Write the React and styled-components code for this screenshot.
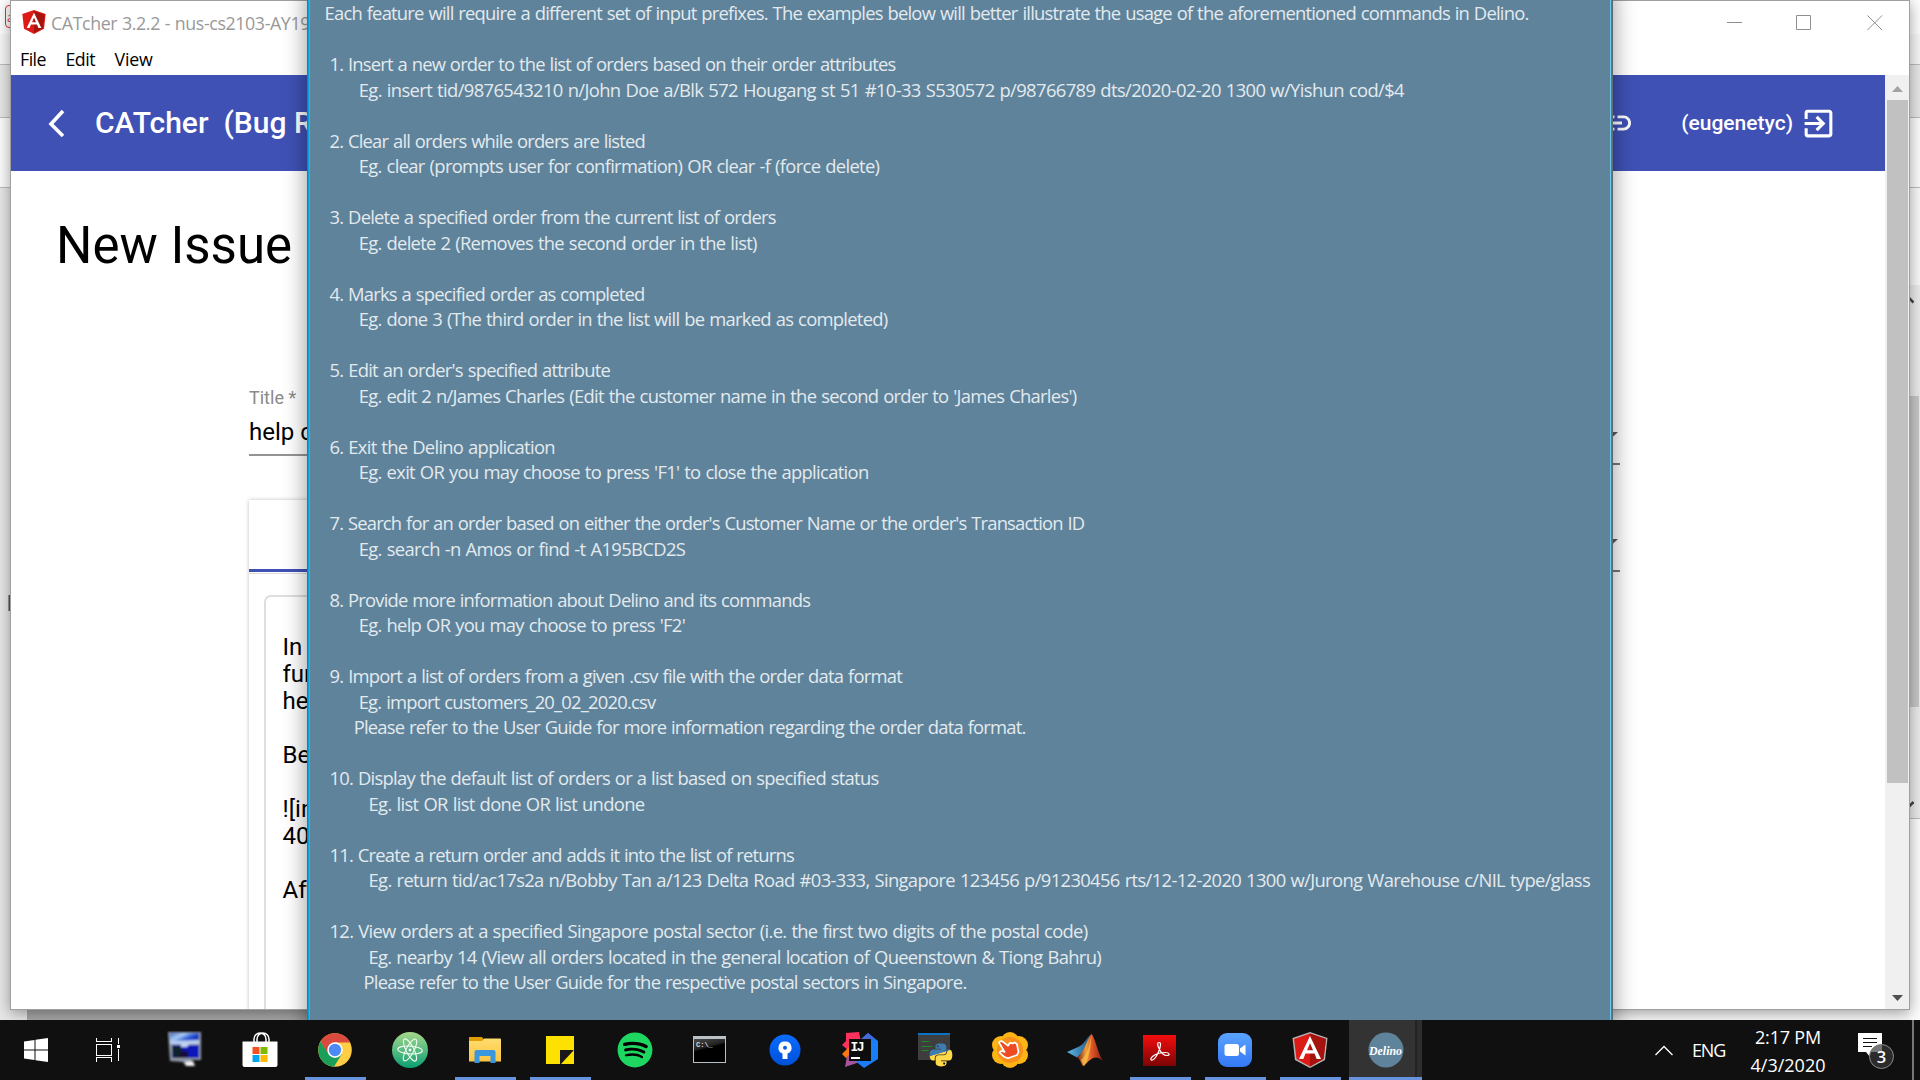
import React from "react";
import styled, { createGlobalStyle } from "styled-components";
import { MdLink, MdExitToApp } from "react-icons/md";
import { FaSpotify, FaPython } from "react-icons/fa";

const UI = '"Open Sans", "Noto Sans", sans-serif';

const GlobalStyle = createGlobalStyle`
  * { box-sizing: border-box; }
  html, body { margin: 0; padding: 0; overflow: hidden; background: #101010; }
`;

const Desktop = styled.div`
  position: relative;
  width: 1920px;
  height: 1080px;
  overflow: hidden;
  font-family: ${UI};
  display: flex;
  flex-direction: column;
`;

const Workspace = styled.div`
  position: relative;
  height: 1020px;
  overflow: hidden;
  background: #fafafa;
`;

/* ---------- letter-spacing that makes a run of text as wide as asked ---------- */
const ctx = document.createElement("canvas").getContext("2d");
function tracking(text, width, font, wordGap) {
  ctx.font = font;
  const spaces = text.split(" ").length - 1;
  return (width - ctx.measureText(text).width - spaces * wordGap) / text.length;
}

const Run = styled.span`
  white-space: pre;
  word-spacing: ${(p) => p.$wordGap}px;
`;

function Fit({ text, width, size, weight = 400, wordGap = 0 }) {
  const spacing = tracking(text, width, `${weight} ${size}px ${UI}`, wordGap);
  return <Run $wordGap={wordGap} style={{ letterSpacing: `${spacing.toFixed(4)}px` }}>{text}</Run>;
}

/* ---------- browser behind ---------- */
const Behind = styled.div`
  height: 100%;
  display: flex;
  justify-content: space-between;
`;
const Strip = styled.div`
  width: ${(p) => p.$w}px;
  display: flex;
  flex-direction: column;
  overflow: hidden;
`;
const Band = styled.div`
  height: ${(p) => p.$h}px;
  flex: none;
  background: ${(p) => p.$c};
  border-bottom: ${(p) => (p.$line ? "1px solid #bdbdbd" : "0")};
`;
const TabBadge = styled.div`
  width: 24px;
  height: 23px;
  margin: 5px 0 0 5px;
  border: 1.5px solid #e5322d;
  border-radius: 4px;
  color: #e5322d;
  font: 12px ${UI};
  line-height: 24px;
  padding-left: 1px;
`;
const Grip = styled.div`
  width: 3px;
  height: 16px;
  margin: 407px 0 0 8px;
  background: linear-gradient(90deg, #999 0 1px, #555 1px);
`;
const BackThumb = styled.div`
  width: 10px;
  height: 311px;
  background: #c8c8c8;
  margin-top: 91px;
`;
const Slash = styled.svg`
  display: block;
  margin-top: ${(p) => p.$top}px;
`;
const BackFloor = styled.div`
  position: absolute;
  left: 27px;
  bottom: 0;
  width: 281px;
  height: 12px;
  background: #a8a8a8;
`;

/* ---------- CATcher window ---------- */
const Window = styled.section`
  position: absolute;
  left: 10px;
  top: 0;
  width: 1900px;
  height: 1010px;
  border: 1px solid #a0a0a0;
  background: #fff;
  box-shadow: 0 3px 14px rgba(0, 0, 0, 0.38);
  display: flex;
  flex-direction: column;
`;
const TitleBar = styled.header`
  height: 42px;
  flex: none;
  display: flex;
  align-items: flex-start;
  justify-content: space-between;
  padding: 9px 26px 0 11px;
  color: #999;
  font-size: 17.8px;
`;
const AppName = styled.div`
  display: flex;
  gap: 5px;
  line-height: 27px;
`;
const Controls = styled.div`
  display: flex;
  gap: 54px;
  padding-top: 5px;
  svg:last-child { margin-left: 2px; }
`;
const MenuBar = styled.nav`
  height: 32px;
  flex: none;
  padding: 3px 0 0 9px;
  display: flex;
  gap: 19.5px;
  font-size: 17.8px;
  line-height: 26px;
  color: #000;
`;
const Body = styled.div`
  display: flex;
  flex: 1;
  min-height: 0;
  font-family: Roboto, sans-serif;
`;
const Page = styled.main`
  flex: 1;
  display: flex;
  flex-direction: column;
  overflow: hidden;
`;
const Toolbar = styled.div`
  height: 96px;
  flex: none;
  background: #3f51b5;
  color: #fff;
  display: flex;
  align-items: center;
  padding: 0 48px 0 37px;
  font-weight: 500;
`;
const Brand = styled.div`
  font-size: 30px;
  line-height: 40px;
  margin: 0 0 0 29px;
  white-space: pre;
`;
const ToolbarEnd = styled.div`
  margin-left: auto;
  display: flex;
  align-items: center;
  font-size: 21px;
  svg { flex: none; }
`;
const User = styled.span`
  margin: 0 7px 0 47px;
`;
const PageTitle = styled.h1`
  margin: 45px 0 0 45px;
  font-weight: 400;
  font-size: 51px;
  line-height: 60px;
  color: #000;
`;
const Form = styled.div`
  flex: 1;
  padding: 109px 265px 0 238px;
  display: flex;
  gap: 36px;
`;
const MainColumn = styled.div`
  width: 1040px;
  display: flex;
  flex-direction: column;
`;
const Field = styled.label`
  display: flex;
  flex-direction: column;
  border-bottom: 2px solid #949494;
  height: 71px;
  margin-top: 0;
`;
const FieldLabel = styled.span`
  font-size: 18px;
  line-height: 22px;
  margin-top: 2px;
  color: #8a8a8a;
`;
const FieldValue = styled.span`
  font-size: 24px;
  line-height: 28px;
  margin-top: 9px;
  color: #000;
`;
const Editor = styled.div`
  margin-top: 44px;
  flex: 1;
  box-shadow: 0 0 4px rgba(0, 0, 0, 0.25);
  display: flex;
  flex-direction: column;
`;
const Tabs = styled.div`
  height: 74px;
  flex: none;
  border-bottom: 1px solid #dcdcdc;
  display: flex;
  padding-bottom: 1px;
`;
const Tab = styled.div`
  width: 300px;
  border-bottom: 3px solid #3f51b5;
`;
const TextBox = styled.div`
  margin: 21px 15px 0;
  height: 500px;
  border: 2px solid #dedede;
  border-radius: 7px;
  padding: 37px 16.5px;
  font-size: 24px;
  line-height: 27px;
  white-space: pre;
  color: #000;
`;
const SideColumn = styled.div`
  flex: 1;
  padding-top: 46px;
  display: flex;
  flex-direction: column;
  gap: 73px;
`;
const Select = styled.div`
  height: 34px;
  border-bottom: 2px solid #777;
  display: flex;
  justify-content: flex-end;
  padding-right: 2px;
`;
const Scrollbar = styled.div`
  width: 24px;
  background: #f0f0f0;
  display: flex;
  flex-direction: column;
  align-items: flex-start;
`;
const Thumb = styled.div`
  width: 21px;
  height: 683px;
  margin: 0 0 auto 2px;
  background: #c1c1c1;
`;
const ArrowBox = styled.div`
  height: 25px;
  width: 24px;
  padding: ${(p) => p.$pad}px 0 0 7px;
`;

/* ---------- help window ---------- */
const HelpWindow = styled.section`
  position: absolute;
  left: 307px;
  top: -12px;
  width: 1306px;
  height: 1060px;
  padding: 12px 0 0 16px;
  border-left: 1px solid #5f6b72;
  border-right: 1px solid #5f6b72;
  background:
    linear-gradient(90deg, #0aa0dc 0 1px, #46a8d0 1px 2px, transparent 2px calc(100% - 2px), #6cc8ea calc(100% - 2px) calc(100% - 1px), #1492c8 calc(100% - 1px)),
    #5f839b;
  box-shadow: 0 0 22px rgba(0, 0, 0, 0.42);
  display: flex;
  flex-direction: column;
`;
const HelpLine = styled.div`
  height: 25.5px;
  flex: none;
  line-height: 25.5px;
  font-size: 18.4px;
  color: #e3eaee;
  padding-left: ${(p) => p.$indent}px;
  margin-top: ${(p) => (p.$gap ? "25.5px" : "0")};
`;

const HELP = [
  [325, 1529, "Each feature will require a different set of input prefixes. The examples below will better illustrate the usage of the aforementioned commands in Delino."],
  [330, 896, "1. Insert a new order to the list of orders based on their order attributes", 1],
  [359.2, 1404.5, "Eg. insert tid/9876543210 n/John Doe a/Blk 572 Hougang st 51 #10-33 S530572 p/98766789 dts/2020-02-20 1300 w/Yishun cod/$4"],
  [330, 645.5, "2. Clear all orders while orders are listed", 1],
  [359.2, 879.8, "Eg. clear (prompts user for confirmation) OR clear -f (force delete)"],
  [330, 776.3, "3. Delete a specified order from the current list of orders", 1],
  [359.2, 757.3, "Eg. delete 2 (Removes the second order in the list)"],
  [330, 645, "4. Marks a specified order as completed", 1],
  [359.2, 888, "Eg. done 3 (The third order in the list will be marked as completed)"],
  [330, 610.7, "5. Edit an order's specified attribute", 1],
  [359.2, 1077, "Eg. edit 2 n/James Charles (Edit the customer name in the second order to 'James Charles')"],
  [330, 555.3, "6. Exit the Delino application", 1],
  [359.2, 869, "Eg. exit OR you may choose to press 'F1' to close the application"],
  [330, 1084.8, "7. Search for an order based on either the order's Customer Name or the order's Transaction ID", 1],
  [359.2, 685.7, "Eg. search -n Amos or find -t A195BCD2S"],
  [330, 810.6, "8. Provide more information about Delino and its commands", 1],
  [359.2, 685.5, "Eg. help OR you may choose to press 'F2'"],
  [330, 902.5, "9. Import a list of orders from a given .csv file with the order data format", 1],
  [359.2, 656, "Eg. import customers_20_02_2020.csv"],
  [354.2, 1026, "Please refer to the User Guide for more information regarding the order data format."],
  [330, 879, "10. Display the default list of orders or a list based on specified status", 1],
  [369, 645, "Eg. list OR list done OR list undone"],
  [330, 794.5, "11. Create a return order and adds it into the list of returns", 1],
  [369, 1590.5, "Eg. return tid/ac17s2a n/Bobby Tan a/123 Delta Road #03-333, Singapore 123456 p/91230456 rts/12-12-2020 1300 w/Jurong Warehouse c/NIL type/glass"],
  [330, 1088, "12. View orders at a specified Singapore postal sector (i.e. the first two digits of the postal code)", 1],
  [369, 1101.5, "Eg. nearby 14 (View all orders located in the general location of Queenstown & Tiong Bahru)"],
  [364, 967, "Please refer to the User Guide for the respective postal sectors in Singapore."],
];

/* ---------- taskbar ---------- */
const Taskbar = styled.footer`
  position: relative;
  height: 60px;
  flex: none;
  background: #101010;
  color: #fff;
  display: flex;
`;
const SystemButton = styled.div`
  width: 72px;
  display: flex;
  align-items: center;
  justify-content: center;
`;
const Apps = styled.div`
  display: flex;
  gap: 14px;
  padding-left: 11px;
`;
const AppButton = styled.div`
  width: 61px;
  height: 60px;
  display: flex;
  align-items: center;
  justify-content: center;
  border-bottom: 3px solid ${(p) => (p.$open ? "#6893de" : "transparent")};
  padding: 3px 2px 0 0;
`;
const ActiveApp = styled(AppButton)`
  width: 73px;
  margin-left: -6px;
  padding-right: 0;
  background: linear-gradient(90deg, #333 0 66px, #232323 66px 68px, #2e2e2e 68px);
`;
const Tray = styled.div`
  margin-left: auto;
  display: flex;
  align-items: center;
  font-size: 18px;
`;
const Lang = styled.div`
  margin: 0 0 0 19px;
  width: 33px;
`;
const Clock = styled.div`
  margin: 0 31.5px 0 25.5px;
  width: 75px;
  display: flex;
  flex-direction: column;
  align-items: center;
  line-height: 28px;
  padding-top: 1px;
`;
const Peek = styled.div`
  width: 8px;
  height: 60px;
  margin-left: 17px;
  border-left: 2px solid #777;
`;

const Angular = ({ size, rim }) => (
  <svg width={size} height={size} viewBox="0 0 36 36">
    <path d="M18 0 35.5 6 33 28 18 36 3 28 .5 6Z" fill={rim || "#dd1b16"} />
    <path d="M18 1.5 34 7 31.5 27 18 34.4 4.500 27 2 7Z" fill="#dd1b16" />
    <path d="M18 1.500 34 7 31.500 27 18 34.400Z" fill="#a6120d" />
    <path d="M18 4 7 27h4.300l2.200-5.400h9L24.700 27H29ZM18 11.200l3 7h-6Z" fill="#fff" fillRule="evenodd" />
  </svg>
);

const StartIcon = () => (
  <svg width="24" height="24" viewBox="0 0 24 24" fill="#fff">
    <path d="M0 3.400 10.500 1.900V11.500H0ZM11.500 1.700 24 0V11.500H11.500ZM0 12.500H10.500V22.100L0 20.600ZM11.500 12.500H24V24L11.500 22.300Z" />
  </svg>
);
const TaskViewIcon = () => (
  <svg width="24" height="24" viewBox="0 0 24 24" fill="none" stroke="#fff" shapeRendering="crispEdges">
    <path d="M.5 0V3.500H15.500V0M.5 24V19.500H15.500V24M.5 6.500H15.500V17.500H.5ZM22.500 0V6M22.500 11V23" />
    <path d="M21 7h3v3h-3z" fill="#fff" stroke="none" />
  </svg>
);
const MonitorIcon = () => (
  <svg width="36" height="38" viewBox="0 0 36 38">
    <defs>
      <filter id="soft"><feGaussianBlur stdDeviation="0.9" /></filter>
      <linearGradient id="scr" x1="0" x2="1" y1="0" y2=".6"><stop offset="0" stopColor="#3a66c8" /><stop offset=".4" stopColor="#a9cdf4" /><stop offset=".7" stopColor="#2a5ad8" /><stop offset="1" stopColor="#0a28b4" /></linearGradient>
    </defs>
    <g filter="url(#soft)">
      <path d="M1 1h33v28H24l2 5h-8l-2-3-13-1Z" fill="#8f98a6" />
      <path d="M3 2h29v9H3Z" fill="url(#scr)" />
      <path d="M3 10l29-1v4H3Z" fill="#b9cdf0" />
      <path d="M5 14h27v13H5Z" fill="#0818b8" />
      <path d="M5 15h10v12H6Z" fill="#10242c" /><path d="M14 12h9l-3 4h-6Z" fill="#c2d2f4" />
      <path d="M14 20h7v7h-9Z" fill="#140c3a" /><path d="M18 31l8-1 2 5h-9Z" fill="#f0f0f0" />
    </g>
  </svg>
);
const StoreIcon = () => (
  <svg width="36" height="36" viewBox="0 0 36 36">
    <path d="M12 10V7a6 6 0 0 1 12 0v3M15 10V7a6 6 0 0 1 12 0v3" fill="none" stroke="#fff" strokeWidth="1.500" />
    <path d="M.5 9.500h35V33a2 2 0 0 1-2 2h-31a2 2 0 0 1-2-2Z" fill="#fff" />
    <path d="M10.500 15h7v7h-7z" fill="#f25022" /><path d="M18.500 15h7v7h-7z" fill="#7fba00" />
    <path d="M10.500 23h7v7h-7z" fill="#00a4ef" /><path d="M18.500 23h7v7h-7z" fill="#ffb900" />
  </svg>
);
const ChromeIcon = () => (
  <svg width="34" height="34" viewBox="0 0 34 34">
    <circle cx="17" cy="17" r="16.800" fill="#ffce44" />
    <path d="M2.500 8.600A16.800 16.800 0 0 1 32 9.500H17L9.800 21Z" fill="#db4a3f" />
    <path d="M2.500 8.600A16.800 16.800 0 0 0 16 33.800L24.200 20.500 17 25 10.300 20.800Z" fill="#1a9f5b" />
    <circle cx="17" cy="17" r="7.700" fill="#fff" /><circle cx="17" cy="17" r="6.200" fill="#4c8bf5" />
  </svg>
);
const AtomIcon = () => (
  <svg width="36" height="36" viewBox="0 0 36 36">
    <defs><linearGradient id="atom" x2="0" y2="1"><stop offset="0" stopColor="#a6d78c" /><stop offset="1" stopColor="#0a9f73" /></linearGradient></defs>
    <circle cx="18" cy="18" r="18" fill="url(#atom)" />
    <g fill="none" stroke="#eefaf0" strokeWidth="1.100">
      <ellipse cx="18" cy="18" rx="12.300" ry="3.900" transform="rotate(4 18 18)" />
      <ellipse cx="18" cy="18" rx="12.300" ry="3.900" transform="rotate(63 18 18)" />
      <ellipse cx="18" cy="18" rx="12.300" ry="3.900" transform="rotate(118 18 18)" />
    </g>
    <circle cx="18" cy="18" r="1.500" fill="#fff" />
  </svg>
);
const FolderIcon = () => (
  <svg width="32" height="28" viewBox="0 0 32 28">
    <defs><linearGradient id="fold" x2="0" y2="1"><stop offset="0" stopColor="#ffdc6e" /><stop offset="1" stopColor="#fcc544" /></linearGradient></defs>
    <path d="M0 1h13l2 3H32v5H0Z" fill="#e29d05" />
    <path d="M0 5h13l2-2.500H31a1 1 0 0 1 1 1V25.500H0Z" fill="url(#fold)" />
    <path d="M5.500 27V16a2 2 0 0 1 2-2h17a2 2 0 0 1 2 2v11h-5v-7h-11v7Z" fill="#3a96dd" />
  </svg>
);
const NotesIcon = () => (
  <svg width="28" height="28" viewBox="0 0 28 28">
    <path d="M0 0H28V14L14 28H0Z" fill="#ffe100" /><path d="M14 14H27.500V28H14Z" fill="#181818" /><path d="M28 14V28H15Z" fill="#ffe100" />
  </svg>
);
const SpotifyIcon = styled.div`
  display: flex;
  background: radial-gradient(circle, #000 0 60%, transparent 62%);
  color: #1ed760;
  font-size: 36px;
`;
const Console = styled.div`
  width: 33px;
  height: 27px;
  margin-top: -1px;
  border: 1px solid #b9c1c6;
  border-top-width: 3px;
  background: linear-gradient(165deg, #4a4a4a 0, #222 35%, #000 42%);
  color: #ddd;
  font: bold 7px "Liberation Mono", monospace;
  line-height: 8px;
  padding: 2px 0 0 2px;
`;
const SourceTreeIcon = () => (
  <svg width="32" height="32" viewBox="0 0 32 32">
    <defs><linearGradient id="st" x2="0" y2="1"><stop offset="0" stopColor="#0a6cff" /><stop offset="1" stopColor="#0050d8" /></linearGradient></defs>
    <circle cx="16" cy="16" r="15.500" fill="url(#st)" />
    <path d="M16 7.500a6.200 6.200 0 0 1 2.500 12V25h-5v-5.500A6.200 6.200 0 0 1 16 7.500Z" fill="#fff" /><circle cx="16" cy="13.700" r="2" fill="#0a5fe8" />
  </svg>
);
const IdeaIcon = () => (
  <svg width="36" height="36" viewBox="0 0 36 36">
    <path d="M4 1 17 0 20 16 6 18 0 13 4 9Z" fill="#fe315d" />
    <path d="M0 22 8 14 14 24 4 26Z" fill="#f97a12" />
    <path d="M5 24 14 20 18 30 3 35Z" fill="#a5539c" />
    <path d="M18 8 26 1 36 9 36 27 22 36 12 28Z" fill="#1a7df8" />
    <path d="M18 8 26 1 32 6 20 14Z" fill="#4668d8" />
    <path d="M7 7h22v22H7z" fill="#0d0d0d" />
    <path d="M9 25h9v2H9z" fill="#fff" />
    <text x="8.500" y="19" fill="#fff" fontFamily="Liberation Mono, monospace" fontWeight="700" fontSize="13" textLength="14">IJ</text>
  </svg>
);
const PyWindow = styled.div`
  position: relative;
  width: 34px;
  height: 34px;
  background: linear-gradient(#0a73c4 0 2px, #3e3e3e 2px 27px, transparent 27px) left / 32px 34px no-repeat;
  svg { display: block; }
`;
const PythonMark = styled.div`
  position: absolute;
  left: 10px;
  top: 9px;
  font-size: 26px;
`;
const PythonConsole = () => (
  <PyWindow>
    <svg width="32" height="27"><path d="M3.500 8.500h8M3.500 13.500h11M3.500 17.500h7" stroke="#1f8a2a" strokeWidth="1.200" /></svg>
    <PythonMark>
      <svg width="0" height="0">
        <defs><linearGradient id="py" x1="0" x2=".3" y2="1"><stop offset=".5" stopColor="#3c7cb0" /><stop offset=".52" stopColor="#ffd94a" /></linearGradient></defs>
      </svg>
      <FaPython fill="url(#py)" />
    </PythonMark>
  </PyWindow>
);
const HandIcon = () => (
  <svg width="36" height="36" viewBox="0 0 36 36">
    <g fill="#fdb515">
      <circle cx="18" cy="9" r="9" /><circle cx="18" cy="27" r="9" /><circle cx="9" cy="13" r="9" /><circle cx="27" cy="13" r="9" /><circle cx="9" cy="23" r="9" /><circle cx="27" cy="23" r="9" />
    </g>
    <circle cx="18" cy="18" r="13" fill="#f98f1d" />
    <path d="M7.300 10.200c.8-1.600 2.600-1.300 3.800-.4l5 4 1.800-3 2.600.6 2.200-.9 2.200 1.500 1.600 8.200-1.500 2.800-9 3.200-3.800-1.400-4.600-4.200c.6-1.800 2.800-1.800 5-.6L8 12.200c-.6-.6-.9-1.300-.7-2Z" fill="#ef4b23" stroke="#fff" strokeWidth="1.700" strokeLinejoin="round" />
  </svg>
);
const MatlabIcon = () => (
  <svg width="36" height="34" viewBox="0 0 36 34">
    <defs>
      <linearGradient id="ml" x2="1"><stop offset="0" stopColor="#7a1c14" /><stop offset=".35" stopColor="#f2a03c" /><stop offset=".55" stopColor="#e05a28" /><stop offset="1" stopColor="#8e1b12" /></linearGradient>
      <linearGradient id="mb" x2="1"><stop offset="0" stopColor="#5ab8e8" /><stop offset="1" stopColor="#24507e" /></linearGradient>
    </defs>
    <path d="M0 19 10 14.500 13 13C18 10 20 4 24.500 1L20 15 10 24.500Z" fill="url(#mb)" />
    <path d="M10 24.500C17 20 20 6 24.500 1 28 4 31 21 36 28 29 22 25 24 17 33 14 33 14 26 10 24.500Z" fill="url(#ml)" />
    <path d="M14 27C19 24 23 12 24.500 2 24 14 22 25 17 33Z" fill="#f8c04a" opacity=".75" />
  </svg>
);
const AcrobatIcon = () => (
  <svg width="33" height="31" viewBox="0 0 33 31">
    <defs><linearGradient id="ac" x2="0" y2="1"><stop offset="0" stopColor="#f40d0d" /><stop offset="1" stopColor="#7c0404" /></linearGradient></defs>
    <path d="M0 0h33v31H0z" fill="url(#ac)" />
    <path d="M16 7.500c-2 0-1.500 3 0 6 2 4.500 5 7 8 7 3.500 0 2.500-3-1.500-3-5 0-10 1.500-13 4-2.500 2.200-2 4 0 3.500C13 24 17.500 14 17.500 9.500c0-1.400-.5-2-1.500-2Z" fill="none" stroke="#fff" strokeWidth="1.200" />
  </svg>
);
const ZoomIcon = () => (
  <svg width="34" height="34" viewBox="0 0 34 34">
    <defs><linearGradient id="zm" x2="0" y2="1"><stop offset="0" stopColor="#5aa3ff" /><stop offset="1" stopColor="#3478f6" /></linearGradient></defs>
    <rect width="34" height="34" rx="9" fill="url(#zm)" />
    <rect x="6.500" y="11" width="14.500" height="12" rx="2.500" fill="#fff" /><path d="M22 15.500 27.500 11.500V22.500L22 18.500Z" fill="#fff" />
  </svg>
);
const DelinoIcon = () => (
  <svg width="36" height="36" viewBox="0 0 36 36">
    <circle cx="18" cy="18" r="17.500" fill="#5f839b" />
    <text x="1" y="23" fill="#fff" fontFamily="Liberation Serif, serif" fontStyle="italic" fontWeight="700" fontSize="13" textLength="33" lengthAdjust="spacingAndGlyphs">Delino</text>
  </svg>
);
const ActionCenter = () => (
  <svg width="38" height="38" viewBox="0 0 38 38">
    <path d="M1 2h24v19H18l-5 5-4-5H1Z" fill="#fff" />
    <path d="M6 7.500h14M6 11.500h14M6 15.500h9" stroke="#101010" strokeWidth="1.200" />
    <circle cx="24.500" cy="25.500" r="12" fill="#2b2b2b" stroke="#8a8a8a" />
    <path d="M13.500 21A12 12 0 0 1 25 13.500V21Z" fill="#777" />
    <text x="24.500" y="31.500" textAnchor="middle" fill="#fff" fontFamily="Open Sans, sans-serif" fontWeight="600" fontSize="16.500">3</text>
  </svg>
);

const APPS = [
  [MonitorIcon], [StoreIcon], [ChromeIcon, 1], [AtomIcon], [FolderIcon, 1], [NotesIcon, 1],
  [() => <SpotifyIcon><FaSpotify /></SpotifyIcon>],
  [() => <Console>C:\_</Console>],
  [SourceTreeIcon], [IdeaIcon], [PythonConsole], [HandIcon], [MatlabIcon],
  [AcrobatIcon, 1], [ZoomIcon, 1], [() => <Angular size={36} rim="#b3b3b3" />, 1],
];

const SelectArrow = () => <svg width="14" height="7"><path d="M0 1h14L7 7.500Z" fill="#5a5a5a" /></svg>;

export default function App() {
  return (
    <Desktop>
      <GlobalStyle />
      <Workspace>
        <Behind>
          <Strip $w={40}>
            <Band $h={34} $c="#fefefe"><Strip $w={40}><TabBadge>a</TabBadge></Strip></Band>
            <Band $h={31} $c="#f8f8f8" $line />
            <Band $h={53} $c="#e8e8e8" $line />
            <Band $h={70} $c="#fdfdfd" $line />
            <Band $h={832} $c="#e8e8e8"><Strip $w={20}><Grip /></Strip></Band>
          </Strip>
          <Strip $w={11}>
            <Band $h={34} $c="#fefefe" />
            <Band $h={31} $c="#f8f8f8" $line />
            <Band $h={53} $c="#e8e8e8" $line />
            <Band $h={70} $c="#fdfdfd" $line />
            <Band $h={97} $c="#fafafa" />
            <Band $h={534} $c="#ececec" $line>
              <Strip $w={11}>
                <Slash $top={11} width="5" height="9"><path d="M0 2 4.500 6.500" stroke="#444" strokeWidth="2.500" /></Slash>
                <BackThumb />
                <Slash $top={93} width="5" height="9"><path d="M0 6.500 4.500 2" stroke="#444" strokeWidth="2.500" /></Slash>
              </Strip>
            </Band>
            <Band $h={201} $c="#fdfdfd" />
          </Strip>
        </Behind>
        <BackFloor />

        <Window>
          <TitleBar>
            <AppName>
              <Angular size={24} />
              <Fit text="CATcher 3.2.2 - nus-cs2103-AY19" width={259} size={17.8} wordGap={0.5} />
            </AppName>
            <Controls>
              <svg width="15" height="16"><path d="M0 7.500h15" stroke="#8f8f8f" /></svg>
              <svg width="15" height="16"><path d="M.5.500h14v14H.5z" fill="none" stroke="#8f8f8f" /></svg>
              <svg width="16" height="16"><path d="M.5.500 15 15M15 .500.500 15" stroke="#8f8f8f" /></svg>
            </Controls>
          </TitleBar>
          <MenuBar>
            <Fit text="File" width={26} size={17.8} />
            <Fit text="Edit" width={29.500} size={17.8} />
            <Fit text="View" width={38} size={17.8} />
          </MenuBar>
          <Body>
            <Page>
              <Toolbar>
                <svg width="18" height="28" viewBox="0 0 18 28"><path d="M16 2 4 15 16 27" transform="translate(-1 0)" fill="none" stroke="#fff" strokeWidth="3.600" /></svg>
                <Brand>CATcher  (Bug R</Brand>
                <ToolbarEnd>
                  <MdLink size={36} />
                  <User>(eugenetyc)</User>
                  <MdExitToApp size={37} />
                </ToolbarEnd>
              </Toolbar>
              <PageTitle>New Issue</PageTitle>
              <Form>
                <MainColumn>
                  <Field>
                    <FieldLabel>Title *</FieldLabel>
                    <FieldValue>help c</FieldValue>
                  </Field>
                  <Editor>
                    <Tabs><Tab /></Tabs>
                    <TextBox>{"In\nfun\nhe\n\nBe\n\n![in\n40\n\nAft"}</TextBox>
                  </Editor>
                </MainColumn>
                <SideColumn>
                  <Select><SelectArrow /></Select>
                  <Select><SelectArrow /></Select>
                </SideColumn>
              </Form>
            </Page>
            <Scrollbar>
              <ArrowBox $pad={6}><svg width="11" height="14"><path d="M0 10 5.500 4 11 10Z" fill="#a3a3a3" /></svg></ArrowBox>
              <Thumb />
              <ArrowBox $pad={4}><svg width="11" height="14"><path d="M0 6h11L5.500 12Z" fill="#505050" /></svg></ArrowBox>
            </Scrollbar>
          </Body>
        </Window>

        <HelpWindow>
          {HELP.map(([x, end, text, gap]) => (
            <HelpLine key={text} $indent={x - 324.500} $gap={gap}>
              <Fit text={text} width={end - x} size={18.4} wordGap={0.8} />
            </HelpLine>
          ))}
        </HelpWindow>
      </Workspace>

      <Taskbar>
        <SystemButton><StartIcon /></SystemButton>
        <SystemButton><TaskViewIcon /></SystemButton>
        <Apps>
          {APPS.map(([Icon, open], i) => <AppButton key={i} $open={open}><Icon /></AppButton>)}
          <ActiveApp $open><DelinoIcon /></ActiveApp>
        </Apps>
        <Tray>
          <svg width="18" height="11"><path d="M.5 10 9 1.500 17.500 10" fill="none" stroke="#fff" strokeWidth="1.300" /></svg>
          <Lang><Fit text="ENG" width={33} size={18} /></Lang>
          <Clock>
            <Fit text="2:17 PM" width={66} size={18} />
            <Fit text="4/3/2020" width={75} size={18} />
          </Clock>
          <ActionCenter />
          <Peek />
        </Tray>
      </Taskbar>
    </Desktop>
  );
}
